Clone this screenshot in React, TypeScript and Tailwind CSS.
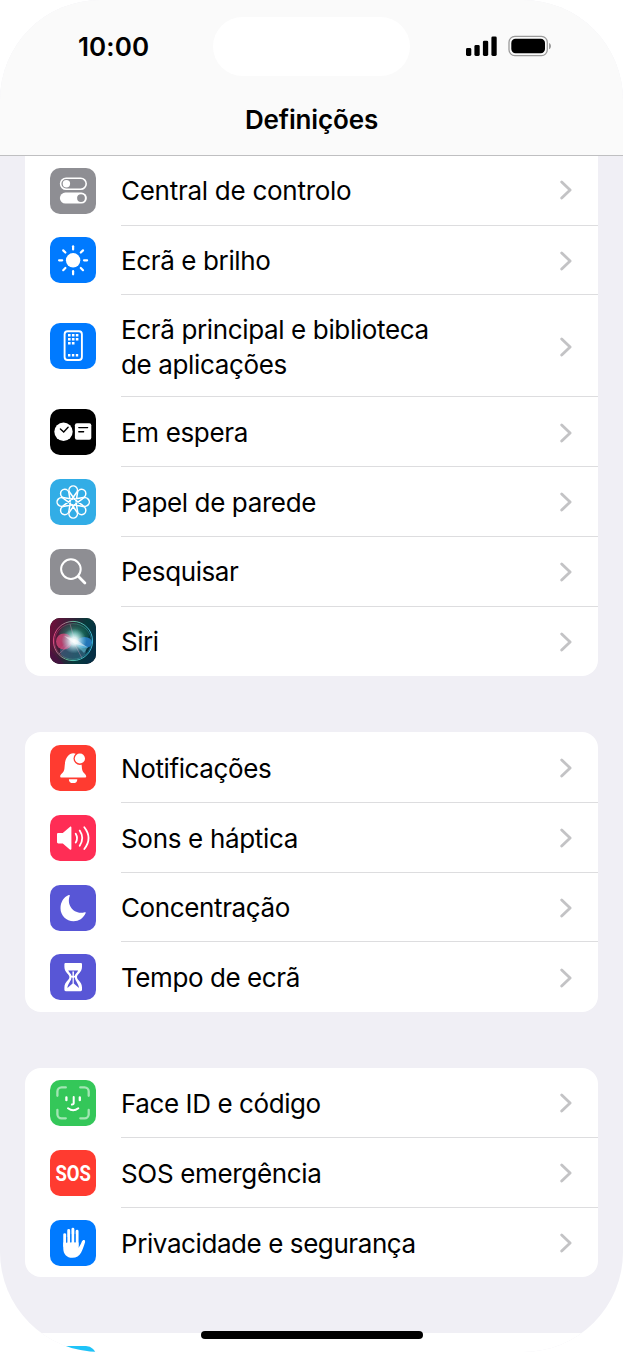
import type { ReactNode } from 'react'

type Item = {
    label: ReactNode
    tracking: string
    bg: string
    icon: ReactNode
    tall?: boolean
}

const petals = [0, 45, 90, 135, 180, 225, 270, 315]

const ControlIcon = (
    <>
        <rect x="10.6" y="10.3" width="25.6" height="11" rx="5.5" fill="none" stroke="#fff" strokeWidth="1.6" />
        <circle cx="16.4" cy="15.8" r="3.7" />
        <rect x="9.9" y="24.6" width="27" height="11" rx="5.5" />
        <circle cx="31" cy="30.1" r="3.9" fill="#8e8e93" />
    </>
)

const SunIcon = (
    <>
        <circle cx="23.1" cy="23.3" r="7.2" />
        {petals.map((a) => (
            <path key={a} d="M23.1 12.4V9.3" transform={`rotate(${a} 23.1 23.3)`} stroke="#fff" strokeWidth="2.2" strokeLinecap="round" />
        ))}
    </>
)

const HomeIcon = (
    <>
        <rect x="14.6" y="8.3" width="17.3" height="28.7" rx="3" fill="none" stroke="#fff" strokeWidth="1.9" />
        <path
            d="M18 11h2.6v2.6H18zM21.9 11h2.6v2.6h-2.6zM25.8 11h2.6v2.6h-2.6zM18 15h2.6v2.6H18zM21.9 15h2.6v2.6h-2.6zM25.8 15h2.6v2.6h-2.6zM18 19h2.6v2.6H18zM21.9 19h2.6v2.6h-2.6zM18 31h2.4v2.4H18zM21.9 31h2.4v2.4h-2.4zM25.8 31h2.4v2.4h-2.4z"
        />
    </>
)

const StandbyIcon = (
    <>
        <circle cx="13.5" cy="22.8" r="9.2" />
        <rect x="24.9" y="14.3" width="16.4" height="16.4" rx="2" />
        <path d="M10.4 19.9l3.3 3 4.4-4.7M28.8 18.6h8.8M28.8 22.7h4.8" fill="none" stroke="#000" strokeWidth="1.4" strokeLinecap="round" />
    </>
)

const FlowerIcon = (
    <g fill="none" stroke="#fff" strokeWidth="1.5" transform="translate(23.2 23)">
        {petals.map((a) => (
            <path key={a} d="M1.8 -2.2L-3.2 -9.2A4.2 4.2 0 1 1 3.2 -9.2L-1.8 -2.2" transform={`rotate(${a})`} />
        ))}
    </g>
)

const SearchIcon = (
    <g fill="none" stroke="#fff" strokeLinecap="round">
        <circle cx="20.9" cy="20.1" r="9.8" strokeWidth="2" />
        <path d="M28.2 27.2l6.7 6.7" strokeWidth="2.8" />
    </g>
)

const SiriIcon = (
    <>
        <defs>
            <linearGradient id="siri-bg" x1="0" y1="0.2" x2="1" y2="0.5">
                <stop offset="0" stopColor="#6f0f3b" />
                <stop offset="0.45" stopColor="#2c2438" />
                <stop offset="0.7" stopColor="#063a3b" />
                <stop offset="1" stopColor="#062f45" />
            </linearGradient>
            <linearGradient id="siri-ring" x1="0" y1="0.4" x2="1" y2="0.6">
                <stop offset="0" stopColor="#e0457f" />
                <stop offset="0.45" stopColor="#5fbf9c" />
                <stop offset="1" stopColor="#3bb4d8" />
            </linearGradient>
            <radialGradient id="siri-glow">
                <stop offset="0" stopColor="#fff" />
                <stop offset="0.3" stopColor="#e9f8fb" stopOpacity="0.9" />
                <stop offset="1" stopColor="#8fd8e8" stopOpacity="0" />
            </radialGradient>
            <radialGradient id="siri-green">
                <stop offset="0" stopColor="#4fb99a" stopOpacity="0.9" />
                <stop offset="1" stopColor="#1b6f5b" stopOpacity="0.3" />
            </radialGradient>
        </defs>
        <rect width="46" height="46" fill="url(#siri-bg)" />
        <path d="M0 46V32L14 46z" fill="#4a0d45" opacity="0.6" />
        <ellipse cx="24" cy="17" rx="15" ry="12" fill="url(#siri-green)" />
        <ellipse cx="23" cy="33" rx="13" ry="9" fill="#3d6f8f" opacity="0.6" />
        <ellipse cx="14" cy="23.5" rx="8" ry="8" fill="#e0487c" opacity="0.75" />
        <ellipse cx="34.5" cy="24.5" rx="7.5" ry="5.5" fill="#2e8be0" opacity="0.75" />
        <path d="M23 24L38 29L34 35z" fill="#6fd3e8" opacity="0.5" />
        <path d="M23 23L9 36M24 25L32 40M24 20L20 6" stroke="#f09ac0" strokeWidth="0.7" opacity="0.5" />
        <circle cx="24" cy="23" r="12.5" fill="url(#siri-glow)" />
        <path d="M14 18L26 21.5L37 29L24 25.5z" fill="#fff" opacity="0.5" />
        <circle cx="23" cy="23" r="19.6" fill="none" stroke="url(#siri-ring)" strokeWidth="1" />
        <ellipse cx="23" cy="23.5" rx="18.4" ry="17.8" fill="none" stroke="url(#siri-ring)" strokeWidth="0.6" opacity="0.6" />
    </>
)

const BellIcon = (
    <>
        <path d="M10.2 31.4c0-2.2 3.7-3.4 4.2-7.6.5-4.2.2-8.7 3.1-12.2C19.3 9.3 21.2 8.3 23.2 8.3s3.9 1 5.7 3.3c2.9 3.5 2.6 8 3.1 12.2.5 4.2 4.2 5.4 4.2 7.6 0 .7-.5 1-1.2 1H11.4c-.7 0-1.2-.3-1.2-1z" />
        <path d="M18.9 34.2h8.4a4.2 3.9 0 0 1-8.4 0z" />
        <circle cx="29.9" cy="13.5" r="6.4" fill="#ff3b30" />
        <circle cx="29.9" cy="13.5" r="5.1" />
    </>
)

const SpeakerIcon = (
    <>
        <path d="M8.4 17.9h4.4l7-6c.8-.6 1.6-.3 1.6.6v21.300c0 .9-.8 1.200-1.600.6l-7-5.900H8.400c-.9 0-1.400-.5-1.400-1.400v-7.800c0-.9.5-1.400 1.400-1.400z" />
        <path
            d="M25.7 18.7q2.7 4.4 0 8.9M29.700 15.600q5.100 7.600 0 15.100M34.300 12.300q8.500 11 0 21.700"
            fill="none"
            stroke="#fff"
            strokeWidth="1.8"
            strokeLinecap="round"
        />
    </>
)

const MoonIcon = <path d="M18.7 10.1c.8-.3 1.3.2 1 .9C16.3 20 24 30.2 34.700 27.200c.9-.2 1.300.2.9 1C33.300 33.200 28.800 36.200 23.600 36.200 16.300 36.200 10.500 30.500 10.500 23.200c0-5.900 3.200-11.100 8.200-13.100z" />

const HourglassIcon = (
    <>
        <path d="M15.8 8.900h14.800c.9 0 1.400.5 1.400 1.400v2.600c0 5.300-5 7-5 10.200s5 4.900 5 10.300v2.400c0 .9-.5 1.400-1.400 1.400H15.800c-.9 0-1.400-.5-1.400-1.400v-2.400c0-5.400 5-7.100 5-10.300s-5-4.900-5-10.200v-2.600c0-.9.5-1.400 1.400-1.400z" />
        <path d="M18.2 16.600h10c-1 2-3 3.300-3.300 5.200h-3.400c-.3-1.900-2.300-3.200-3.300-5.200z" fill="#5856d6" />
        <path d="M21.500 23.600h1.100v6l-5.200 4.500c.4-4.700 3.700-6.500 4.100-10.500zM24.900 23.600h-1.100v6l5.200 4.500c-.4-4.700-3.700-6.500-4.100-10.500z" fill="#5856d6" />
        <path d="M22.400 17.500h1.600l-.2 6.500h-1.200z" />
    </>
)

const FaceIcon = (
    <g fill="none" stroke="#fff" strokeLinecap="round">
        <path
            d="M7.400 15.800v-4.300a4.100 4.100 0 0 1 4.100-4.100h4.300M30.300 7.400h4.300a4.100 4.100 0 0 1 4.100 4.100v4.300M38.700 29.900v4.300a4.100 4.100 0 0 1-4.100 4.100h-4.300M15.800 38.300h-4.300a4.100 4.100 0 0 1-4.100-4.100v-4.300"
            strokeWidth="2.3"
            opacity="0.55"
        />
        <path d="M16.400 17.300v2.900M29.800 17.300v2.900" strokeWidth="2.3" />
        <path d="M23.700 17v6c0 1-.5 1.500-1.800 1.600M18 28.300q5.200 4 10.300 0" strokeWidth="2" />
    </g>
)

const SosIcon = (
    <text textAnchor="middle" transform="translate(23.2 30.8) scale(0.84 1)" className="font-[Roboto,sans-serif] text-[22px] font-bold">
        SOS
    </text>
)

const HandIcon = (
    <>
        <path d="M14.7 14.6V26M18.7 10.500V25M22.900 9.200V25M27.100 11.200V26" stroke="#fff" strokeWidth="2.900" strokeLinecap="round" />
        <path d="M13.250 22.500h15.300v5.200c1.400-1.500 2.400-3.800 3.300-6.100.6-1.400 1.400-1.900 2.300-1.600.9.300 1.200 1.200.8 2.500-1.100 3.700-2.300 7.200-3.800 10-1.800 3.500-4.800 5.300-8.700 5.300-5.800 0-9.200-3.600-9.200-9.800z" />
        <path d="M16.700 17v5.600M20.800 14v8M25 14v8" stroke="#007aff" strokeWidth="0.900" />
    </>
)

const groups: Item[][] = [
    [
        { label: 'Central de controlo', tracking: 'tracking-[-0.27px]', bg: 'bg-[#8e8e93]', icon: ControlIcon },
        { label: 'Ecrã e brilho', tracking: 'tracking-[-0.37px]', bg: 'bg-[#007aff]', icon: SunIcon },
        {
            label: (
                <>
                    Ecrã principal e biblioteca
                    <br />
                    de aplicações
                </>
            ),
            tracking: 'tracking-[-0.36px]',
            bg: 'bg-[#007aff]',
            icon: HomeIcon,
            tall: true,
        },
        { label: 'Em espera', tracking: 'tracking-[-0.35px]', bg: 'bg-black', icon: StandbyIcon },
        { label: 'Papel de parede', tracking: 'tracking-[-0.38px]', bg: 'bg-[#32ade6]', icon: FlowerIcon },
        { label: 'Pesquisar', tracking: 'tracking-[-0.4px]', bg: 'bg-[#8e8e93]', icon: SearchIcon },
        { label: 'Siri', tracking: 'tracking-[-0.5px]', bg: 'bg-black', icon: SiriIcon },
    ],
    [
        { label: 'Notificações', tracking: 'tracking-[-0.38px]', bg: 'bg-[#ff3b30]', icon: BellIcon },
        { label: 'Sons e háptica', tracking: 'tracking-[-0.32px]', bg: 'bg-[#ff2d55]', icon: SpeakerIcon },
        { label: 'Concentração', tracking: 'tracking-[-0.38px]', bg: 'bg-[#5856d6]', icon: MoonIcon },
        { label: 'Tempo de ecrã', tracking: 'tracking-[-0.42px]', bg: 'bg-[#5856d6]', icon: HourglassIcon },
    ],
    [
        { label: 'Face ID e código', tracking: 'tracking-[-0.41px]', bg: 'bg-[#34c759]', icon: FaceIcon },
        { label: 'SOS emergência', tracking: 'tracking-[-0.33px]', bg: 'bg-[#ff3b30]', icon: SosIcon },
        { label: 'Privacidade e segurança', tracking: 'tracking-[-0.42px]', bg: 'bg-[#007aff]', icon: HandIcon },
    ],
    [{ label: '', tracking: '', bg: 'bg-[#1fc3f8]', icon: null }],
]

function Row({ item, first }: { item: Item; first: boolean }) {
    return (
        <div className={`flex items-center pl-[25px] ${item.tall ? 'h-[102.3px]' : 'h-[69.7px]'}`}>
            <div className={`mt-[2px] h-[46px] w-[46px] shrink-0 overflow-hidden rounded-[10px] ${item.bg}`}>
                <svg viewBox="0 0 46 46" className="h-full w-full" fill="#fff">
                    {item.icon}
                </svg>
            </div>
            <div className={`ml-[25px] flex h-full flex-1 items-center justify-between pt-[1.5px] pr-[26.5px] ${first ? '' : 'border-t border-[#dddddf]'}`}>
                <span className={`text-[26px] leading-[35px] whitespace-nowrap ${item.tracking}`}>{item.label}</span>
                <svg viewBox="0 0 12 20" className="h-5 w-3 shrink-0" fill="none" stroke="#c3c3c5" strokeWidth="2.8" strokeLinecap="round" strokeLinejoin="round">
                    <path d="M1.7 1.9L10.1 10L1.700 18.100" />
                </svg>
            </div>
        </div>
    )
}

function StatusBar() {
    return (
        <div className="flex h-[76px] items-start justify-between pt-[17px]">
            <span className="w-[213px] pt-[12px] pl-[78px] text-[26px] leading-[35px] font-semibold tracking-[0.1px]">10:00</span>
            <div className="h-[59px] w-[197px] rounded-full bg-white" />
            <div className="w-[213px] pt-[18px] pl-[56px]">
                <svg viewBox="0 0 86 22" className="h-[22px] w-[86px]">
                    <rect x="0" y="13" width="5.3" height="8" rx="1.4" />
                    <rect x="8.4" y="10" width="5.3" height="11" rx="1.4" />
                    <rect x="16.9" y="5.7" width="5.3" height="15.3" rx="1.4" />
                    <rect x="25.4" y="1.4" width="5.3" height="19.6" rx="1.4" />
                    <rect x="43" y="1.4" width="38.3" height="19.2" rx="5.8" fill="none" stroke="#9b9b9b" strokeWidth="1.3" />
                    <rect x="45.300" y="3.7" width="33.700" height="14.600" rx="4.200" />
                    <path d="M83 8c2.700 1 2.700 5.200 0 6.200z" fill="#9b9b9b" />
                </svg>
            </div>
        </div>
    )
}

function App() {
    return (
        <div className="h-[1352px] w-[623px] overflow-hidden bg-white font-[Inter,'Liberation_Sans',sans-serif] text-black">
            <div className="relative h-full overflow-hidden rounded-[100px] bg-[#f0eff5]">
                <div className="relative z-10 h-[156px] border-b border-[#bfbfc1] bg-[#fafafa]">
                    <StatusBar />
                    <h1 className="pt-[26.4px] text-center text-[26px] leading-[35px] font-semibold tracking-[-0.15px]">Definições</h1>
                </div>
                <div className="-mt-[1.2px] space-y-[56px]">
                    {groups.map((items, g) => (
                        <div key={g} className={`mx-[25px] overflow-hidden bg-white ${g === 0 ? 'rounded-b-[16px] pb-[1.2px]' : 'rounded-[16px] pb-[0.4px]'}`}>
                            {items.map((item, i) => (
                                <Row key={i} item={item} first={i === 0} />
                            ))}
                        </div>
                    ))}
                </div>
                <div className="absolute bottom-[13px] left-[201px] h-[8px] w-[222px] rounded-full bg-black" />
            </div>
        </div>
    )
}

export default App
